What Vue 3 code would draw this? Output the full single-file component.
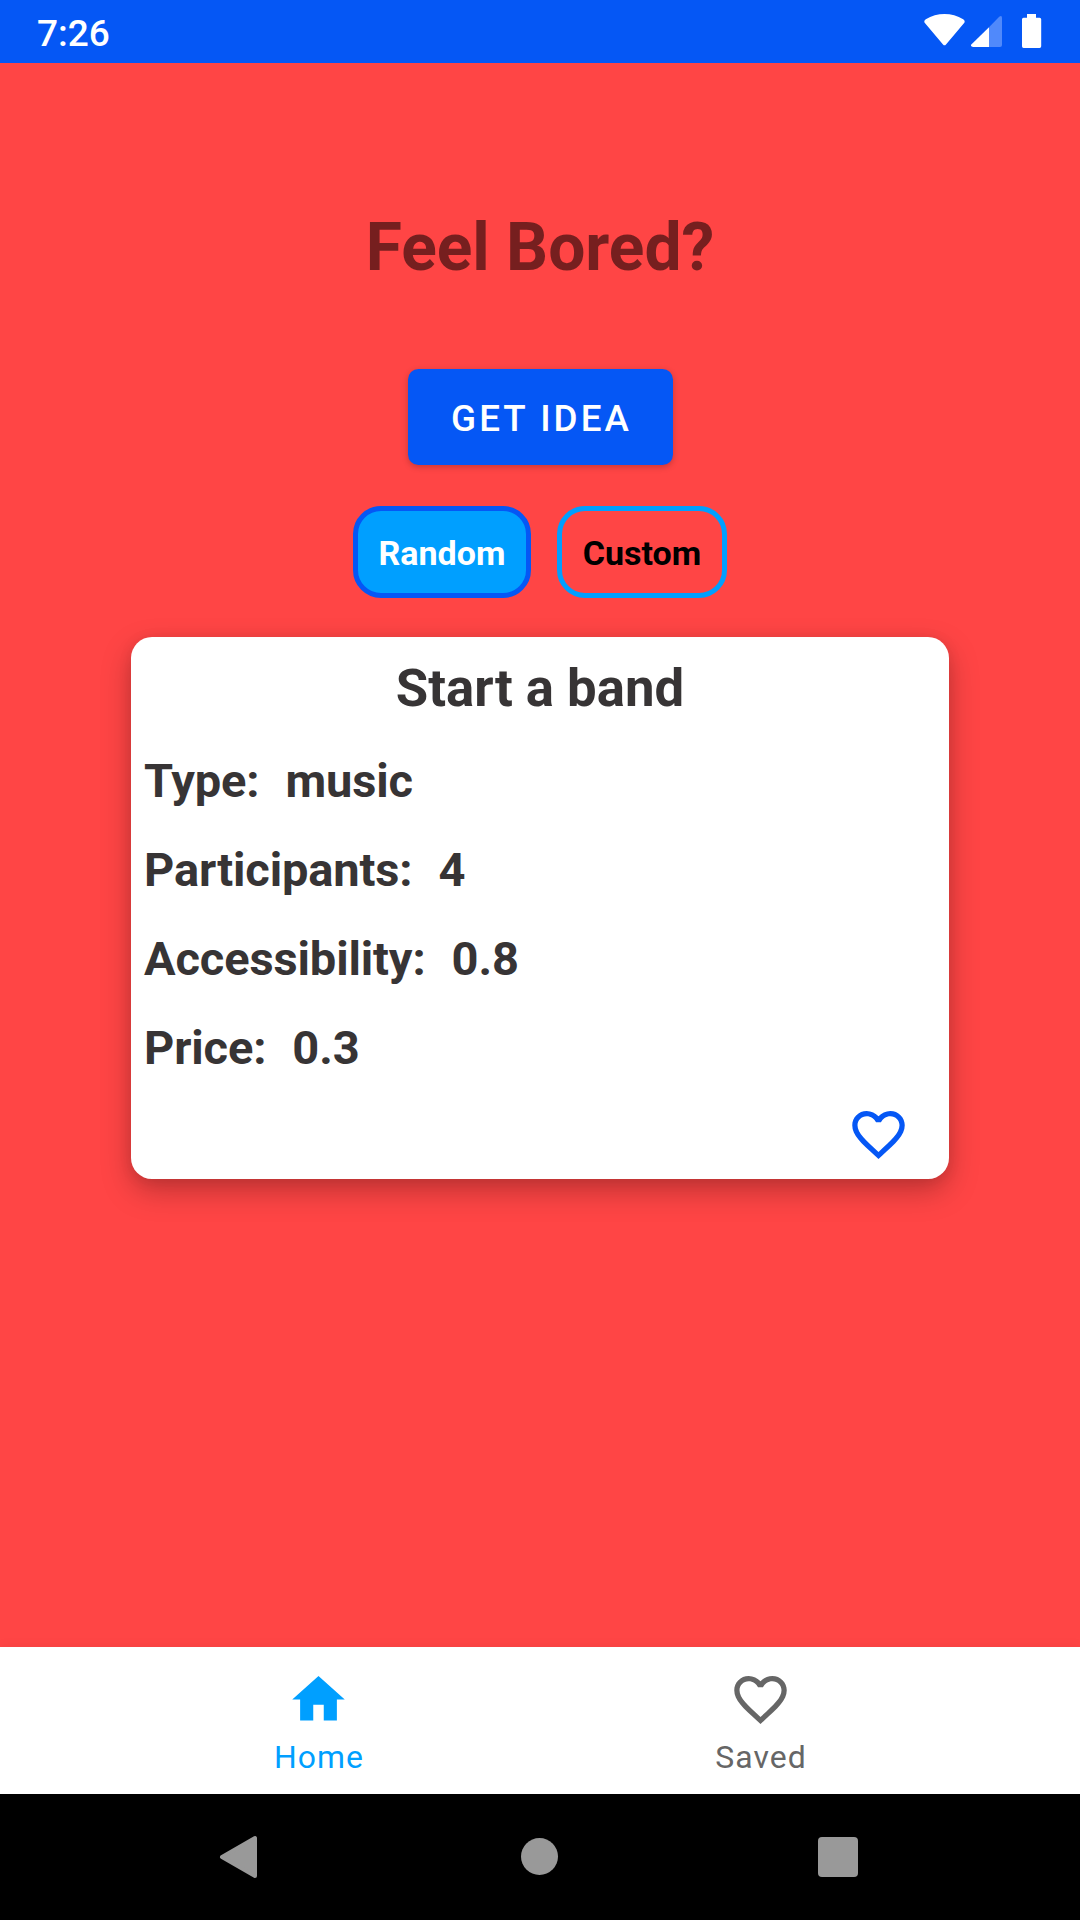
<script setup>
import { ref } from 'vue'

const heart =
  'M16.5 3c-1.74 0-3.41.81-4.5 2.09C10.91 3.81 9.24 3 7.5 3 4.42 3 2 5.42 2 8.5c0 3.78 3.4 6.86 8.55 11.54L12 21.35l1.45-1.32C18.6 15.36 22 12.28 22 8.5 22 5.42 19.58 3 16.5 3zm-4.4 15.55l-.1.1-.1-.1C7.14 14.24 4 11.39 4 8.5 4 6.5 5.5 5 7.5 5c1.54 0 3.04.99 3.57 2.36h1.87C13.46 5.99 14.96 5 16.5 5c2 0 3.5 1.5 3.5 3.5 0 2.89-3.14 5.74-7.9 10.05z'

const mode = ref('Random')
const modes = ['Random', 'Custom']

const idea = {
  title: 'Start a band',
  details: [
    { label: 'Type:', value: 'music' },
    { label: 'Participants:', value: '4' },
    { label: 'Accessibility:', value: '0.8' },
    { label: 'Price:', value: '0.3' },
  ],
}

const tab = ref('Home')
const tabs = [
  { name: 'Home', icon: 'M10 20v-6h4v6h5v-8h3L12 3 2 12h3v8z' },
  { name: 'Saved', icon: heart },
]
</script>

<template>
  <div class="screen">
    <header class="status">
      <span class="clock">7:26</span>
      <svg class="indicators" width="122" height="63" viewBox="0 0 122 63">
        <path
          d="M5.3 23.6 C3.8 22.2 4 20.4 5.8 19.2 C17 12.1 32 12.1 43.2 19.2 C45 20.4 45.2 22.2 43.7 23.6 L26 44.4 Q24.5 46.2 23 44.4 Z"
          fill="#fff"
        />
        <path d="M69 27.2 L79.2 16.8 Q82 14.8 82 18 V45 Q82 47 80 47 H69 Z" fill="#5089fb" />
        <path d="M69 27.2 V47 H53 Q50 46.6 51.3 44.6 Z" fill="#fff" />
        <path
          d="M107 14h9v3.7h3.6q1.6 0 1.6 1.6v27q0 1.7-1.6 1.7h-16q-1.6 0-1.6-1.7v-27q0-1.6 1.6-1.6H107z"
          fill="#fff"
        />
      </svg>
    </header>

    <main class="content">
      <h1>Feel Bored?</h1>
      <button class="get-idea">GET IDEA</button>
      <div class="modes">
        <button
          v-for="m in modes"
          :key="m"
          class="mode"
          :class="{ selected: m === mode }"
          @click="mode = m"
        >
          {{ m }}
        </button>
      </div>

      <section class="card">
        <h2>{{ idea.title }}</h2>
        <div v-for="d in idea.details" :key="d.label" class="row">
          <span>{{ d.label }}</span>
          <span>{{ d.value }}</span>
        </div>
        <svg class="like" width="63" height="63" viewBox="0 0 24 24"><path :d="heart" /></svg>
      </section>
    </main>

    <nav class="tabs">
      <div
        v-for="t in tabs"
        :key="t.name"
        class="tab"
        :class="{ active: t.name === tab }"
        @click="tab = t.name"
      >
        <svg width="63" height="63" viewBox="0 0 24 24"><path :d="t.icon" /></svg>
        <span>{{ t.name }}</span>
      </div>
    </nav>

    <footer class="system">
      <svg width="42" height="44" viewBox="0 0 42 44">
        <path d="M3 22 L36 3 V41 Z" stroke="#999" stroke-width="4" stroke-linejoin="round" />
      </svg>
      <svg width="38" height="38" viewBox="0 0 38 38"><circle cx="18.5" cy="18.5" r="18.5" /></svg>
      <svg width="40" height="40" viewBox="0 0 40 40"><rect width="40" height="40" rx="4" /></svg>
    </footer>
  </div>
</template>

<style>
body {
  margin: 0;
}
</style>

<style scoped>
.screen {
  width: 1080px;
  height: 1920px;
  display: flex;
  flex-direction: column;
  overflow: hidden;
  background: #ff4545;
  font-family: Roboto, 'Liberation Sans', sans-serif;
}

svg {
  display: block;
  flex: none;
}

button {
  font-family: inherit;
  margin: 0;
  box-sizing: border-box;
}

.status {
  height: 63px;
  flex: none;
  display: flex;
  justify-content: space-between;
  background: #0557f5;
  padding: 0 38px 0 37px;
}

.clock {
  font-size: 37px;
  font-weight: 500;
  line-height: 67px;
  color: #fff;
}

.content {
  flex: 1;
  display: flex;
  flex-direction: column;
  align-items: center;
}

h1 {
  margin: 146px 0 0;
  font-size: 65.9px;
  line-height: 77px;
  font-weight: 700;
  color: #761f1f;
}

.get-idea {
  margin-top: 83px;
  width: 265px;
  height: 96px;
  border: 0;
  border-radius: 10.5px;
  background: #0557f5;
  color: #fff;
  font-size: 36.75px;
  font-weight: 500;
  letter-spacing: 3.05px;
  padding: 2px 0 0 3px;
  box-shadow: 0 2px 6px rgba(0, 0, 0, 0.22);
}

.modes {
  display: flex;
  gap: 26px;
  margin-top: 41px;
}

.mode {
  height: 92px;
  width: 170px;
  border: 5px solid #009fff;
  border-radius: 28px;
  background: transparent;
  color: #000;
  font-size: 34px;
  font-weight: 700;
  padding: 1px 0 0;
}

.mode.selected {
  width: 178px;
  border-color: #0557f5;
  background: #009fff;
  color: #fff;
}

.card {
  box-sizing: border-box;
  width: 818px;
  height: 542px;
  margin-top: 39px;
  padding: 20px 13px 0;
  display: flex;
  flex-direction: column;
  border-radius: 21px;
  background: #fff;
  color: #373435;
  box-shadow:
    0 12px 30px rgba(0, 0, 0, 0.25),
    0 2px 14px rgba(0, 0, 0, 0.08);
}

h2 {
  margin: 0 0 17px;
  font-size: 52.7px;
  line-height: 62px;
  font-weight: 700;
  text-align: center;
}

.row {
  display: flex;
  gap: 26px;
  font-size: 47px;
  letter-spacing: -0.12px;
  line-height: 89px;
  font-weight: 700;
}

.like {
  align-self: flex-end;
  margin: 11px 26px 0 0;
  fill: #0557f5;
}

.tabs {
  height: 147px;
  flex: none;
  display: flex;
  justify-content: center;
  background: #fff;
  box-shadow: 0 0 12px rgba(0, 0, 0, 0.06);
}

.tab {
  width: 441px;
  padding-top: 21px;
  display: flex;
  flex-direction: column;
  align-items: center;
  color: #666;
  fill: currentColor;
}

.tab.active {
  box-sizing: border-box;
  padding-right: 2px;
  color: #009fff;
}

.tab span {
  margin: 7px 0 0 1px;
  font-size: 31.9px;
  line-height: 38px;
  letter-spacing: 1.05px;
}

.system {
  box-sizing: border-box;
  height: 126px;
  flex: none;
  display: flex;
  align-items: center;
  justify-content: space-between;
  padding: 0 222px 0 219px;
  background: #000;
  fill: #999;
}
</style>
